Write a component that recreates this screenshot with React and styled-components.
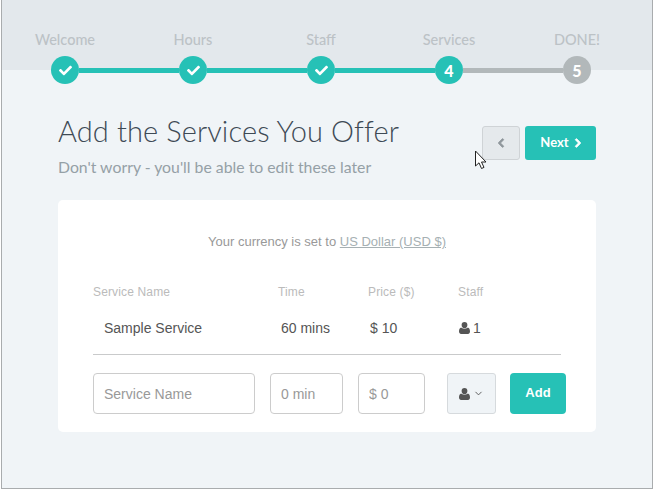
import styled, { createGlobalStyle } from "styled-components";
import { FaCheck, FaChevronLeft, FaChevronRight } from "react-icons/fa";
import { FiChevronDown } from "react-icons/fi";

const GlobalStyle = createGlobalStyle`
  html, body {
    margin: 0;
    padding: 0;
    background: #fff;
  }
  * {
    box-sizing: border-box;
  }
`;

const Frame = styled.div`
  position: relative;
  width: 652px;
  height: 489px;
  margin-left: 1px;
  border-left: 1px solid #a9acae;
  border-bottom: 1px solid #a9acae;
  border-right: 1px solid #a9acae;
  background: #f0f4f7;
  font-family: "Liberation Sans", Arial, sans-serif;
  overflow: hidden;
`;

const Top = styled.div`
  height: 84px;
  background: linear-gradient(#e3e8ec 0, #e3e8ec 70px, #f0f4f7 70px);
  padding-top: 31px;
`;

const Labels = styled.div`
  display: grid;
  grid-template-columns: repeat(5, 128px);
  margin: 0 0 8px -1px;
`;

const Label = styled.div`
  font-family: Lato, sans-serif;
  font-size: 14.5px;
  line-height: 17px;
  font-weight: 500;
  color: #bcc2c6;
  text-align: center;
`;

const Track = styled.div`
  display: flex;
  align-items: center;
  padding-left: 49px;
`;

const Dot = styled.div`
  width: 28px;
  height: 28px;
  border-radius: 50%;
  background: ${(p) => (p.$on ? "#26c1b6" : "#b2b8ba")};
  color: #fff;
  display: flex;
  align-items: center;
  justify-content: center;
  font-family: Lato, sans-serif;
  font-size: 16px;
  font-weight: 900;
`;

const Bar = styled.div`
  width: 100px;
  height: 5px;
  background: ${(p) => (p.$on ? "#26c1b6" : "#b2b8ba")};
`;

const Header = styled.div`
  display: flex;
  justify-content: space-between;
  padding: 30px 56px 0 56px;
  height: 116px;
`;

const Title = styled.h1`
  margin: 0;
  font-family: Lato, sans-serif;
  font-weight: 300;
  font-size: 29px;
  letter-spacing: 0.1px;
  line-height: 34px;
  color: #3e4a55;
`;

const Sub = styled.p`
  margin: 10px 0 0;
  font-family: Lato, sans-serif;
  font-size: 15.8px;
  line-height: 18px;
  color: #95a0a6;
`;

const Buttons = styled.div`
  display: flex;
  gap: 5px;
  padding-top: 12px;
`;

const BackButton = styled.button`
  width: 38px;
  height: 34px;
  padding: 0;
  border: 1px solid #cfd3d6;
  border-radius: 3px;
  background: #e5e9ec;
  color: #8f979c;
  display: flex;
  align-items: center;
  justify-content: center;

  svg {
    stroke: currentColor;
    stroke-width: 50;
  }
`;

const NextButton = styled.button`
  width: 71px;
  height: 34px;
  padding: 0 0 3px 2px;
  border: 0;
  border-radius: 3px;
  background: #26c1b6;
  color: #fff;
  font-family: Lato, sans-serif;
  font-size: 13px;
  font-weight: 700;
  display: flex;
  align-items: center;
  justify-content: center;
  gap: 4px;

  svg {
    stroke: currentColor;
    stroke-width: 50;
    margin-top: 2px;
  }
`;

const Card = styled.div`
  width: 538px;
  height: 232px;
  margin-left: 56px;
  background: #fff;
  border-radius: 5px;
  padding: 34px 30px 0 35px;
`;

const Currency = styled.div`
  padding-right: 5px;
  font-size: 13px;
  line-height: 15px;
  color: #999;
  text-align: center;
  margin-bottom: 36px;
`;

const CurrencyLink = styled.a`
  color: #a6b0b3;
  text-decoration: underline;
`;

const Columns = styled.div`
  display: grid;
  grid-template-columns: 185px 90px 90px 1fr;
  width: 468px;
`;

const Heading = styled.div`
  font-size: 12px;
  letter-spacing: 0.15px;
  line-height: 15px;
  color: #bbb;
`;

const Row = styled(Columns)`
  height: 55px;
  padding-top: 20px;
  border-bottom: 1px solid #c9cacb;
`;

const Cell = styled.div`
  font-size: 14px;
  line-height: 16px;
  color: #555;
  padding-left: ${(p) => p.$pad}px;
  display: flex;
  align-items: center;
  gap: 3px;
  height: 16px;
`;

const Form = styled.div`
  display: flex;
  align-items: flex-start;
  margin-top: 18px;
  height: 41px;
`;

const Input = styled.input`
  width: ${(p) => p.$w}px;
  margin-right: ${(p) => p.$gap}px;
  height: 41px;
  padding: 0 10px;
  border: 1px solid #ccc;
  border-radius: 4px;
  background: #fff;
  font-family: "Liberation Sans", Arial, sans-serif;
  font-size: 14px;

  &::placeholder {
    color: #999;
    opacity: 1;
  }
`;

const StaffSelect = styled.div`
  width: 49px;
  height: 41px;
  margin-left: 7px;
  margin-right: 14px;
  border: 1px solid #d6dadd;
  border-radius: 3px;
  background: #f0f4f7;
  display: flex;
  align-items: center;
  justify-content: center;
  gap: 3px;
  color: #555;
`;

const AddButton = styled.button`
  width: 56px;
  height: 41px;
  padding: 0 0 2px;
  border: 0;
  border-radius: 4px;
  background: #26c1b6;
  color: #fff;
  font-family: "Liberation Sans", Arial, sans-serif;
  font-size: 13px;
  font-weight: 700;
`;

const Cursor = styled.svg`
  position: absolute;
  left: 472px;
  top: 150px;
`;

const UserIcon = () => (
  <svg width="11" height="12" viewBox="0 0 11 12" fill="#555">
    <ellipse cx="5.5" cy="3.1" rx="2.9" ry="3.1" />
    <path d="M2.2 5.6 C3 7 8 7 8.8 5.6 C10.2 6 11 7.4 11 9.6 C11 11.2 10 12 9 12 L2 12 C1 12 0 11.2 0 9.6 C0 7.4 0.8 6 2.2 5.6 Z" />
  </svg>
);

const steps = ["Welcome", "Hours", "Staff", "Services", "DONE!"];

export default function App() {
  return (
    <>
      <GlobalStyle />
      <Frame>
        <Top>
          <Labels>
            {steps.map((s) => (
              <Label key={s}>{s}</Label>
            ))}
          </Labels>
          <Track>
            <Dot $on><FaCheck size={13} /></Dot>
            <Bar $on />
            <Dot $on><FaCheck size={13} /></Dot>
            <Bar $on />
            <Dot $on><FaCheck size={13} /></Dot>
            <Bar $on />
            <Dot $on>4</Dot>
            <Bar />
            <Dot>5</Dot>
          </Track>
        </Top>
        <Header>
          <div>
            <Title>Add the Services You Offer</Title>
            <Sub>Don't worry - you'll be able to edit these later</Sub>
          </div>
          <Buttons>
            <BackButton><FaChevronLeft size={10} /></BackButton>
            <NextButton>Next <FaChevronRight size={10} /></NextButton>
          </Buttons>
        </Header>
        <Card>
          <Currency>
            Your currency is set to <CurrencyLink href="#">US Dollar (USD $)</CurrencyLink>
          </Currency>
          <Columns>
            <Heading>Service Name</Heading>
            <Heading>Time</Heading>
            <Heading>Price ($)</Heading>
            <Heading>Staff</Heading>
          </Columns>
          <Row>
            <Cell $pad={11}>Sample Service</Cell>
            <Cell $pad={3}>60 mins</Cell>
            <Cell $pad={2}>$ 10</Cell>
            <Cell $pad={1}><UserIcon /> 1</Cell>
          </Row>
          <Form>
            <Input $w={162} $gap={15} placeholder="Service Name" />
            <Input $w={73} $gap={15} placeholder="0 min" />
            <Input $w={67} $gap={15} placeholder="$ 0" />
            <StaffSelect>
              <UserIcon />
              <FiChevronDown size={11} />
            </StaffSelect>
            <AddButton>Add</AddButton>
          </Form>
        </Card>
        <Cursor width="14" height="22" viewBox="0 0 14 22">
          <path d="M1.5 1 L1.5 16 L5 12.8 L7.5 18.5 L10 17.4 L7.5 12 L12 12 Z" fill="#fff" stroke="#222" strokeWidth="1" />
        </Cursor>
      </Frame>
    </>
  );
}
